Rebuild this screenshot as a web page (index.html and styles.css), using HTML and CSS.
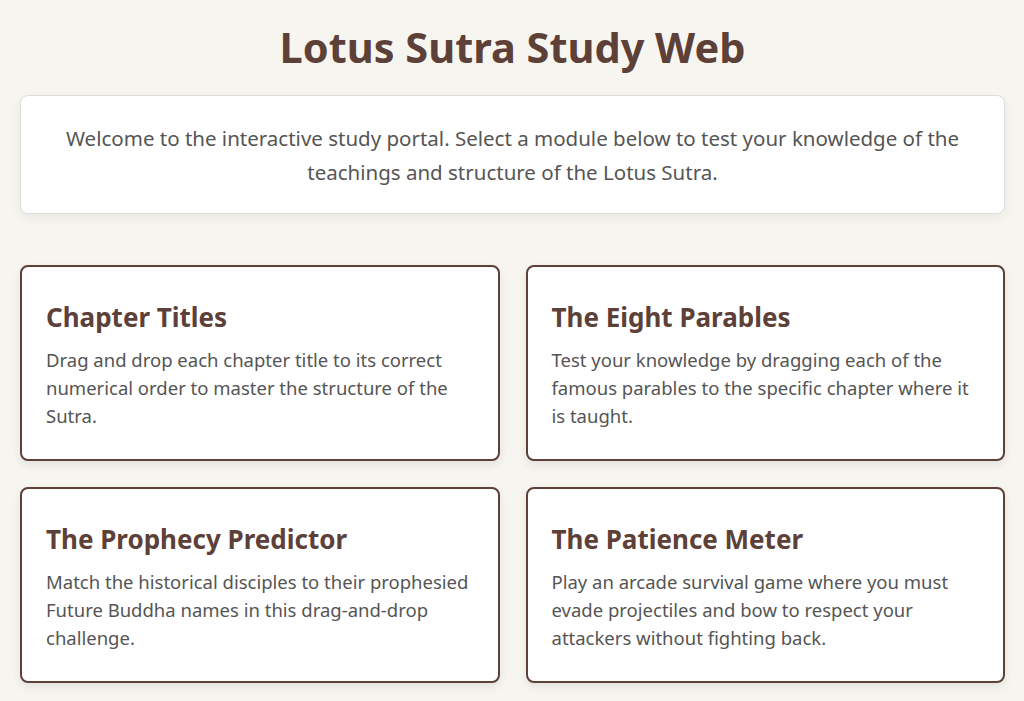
FILE: index.html
```html
<!DOCTYPE html>
<html lang="en">
<head>
    <meta charset="UTF-8">
    <meta name="viewport" content="width=device-width, initial-scale=1.0">
    <title>Lotus Sutra Study Web</title>
    <link rel="stylesheet" href="styles.css">
</head>
<body>
    <h1>Lotus Sutra Study Web</h1>
    <div class="intro">
        <p>Welcome to the interactive study portal. Select a module below to test your knowledge of the teachings and structure of the Lotus Sutra.</p>
    </div>
    <div class="module-grid">
        <div class="module-card">
            <h2>Chapter Titles</h2>
            <p>Drag and drop each chapter title to its correct numerical order to master the structure of the Sutra.</p>
        </div>
        <div class="module-card">
            <h2>The Eight Parables</h2>
            <p>Test your knowledge by dragging each of the famous parables to the specific chapter where it is taught.</p>
        </div>
        <div class="module-card">
            <h2>The Prophecy Predictor</h2>
            <p>Match the historical disciples to their prophesied Future Buddha names in this drag-and-drop challenge.</p>
        </div>
        <div class="module-card">
            <h2>The Patience Meter</h2>
            <p>Play an arcade survival game where you must evade projectiles and bow to respect your attackers without fighting back.</p>
        </div>
    </div>
</body>
</html>
```

FILE: styles.css
```css
body {
    font-family: "Noto Sans", "Open Sans", sans-serif;
    background-color: #f7f5f0;
    color: #555;
    margin: 0;
    padding: 20px 19px 20px 20px;
}
h1 {
    color: #5d4037;
    text-align: center;
    font-size: 41.5px;
    margin: 0 0 21px;
    line-height: 54px;
}
.intro {
    background: #fff;
    border: 1px solid #ddd;
    border-radius: 8px;
    padding: 25px 30px 24px;
    text-align: center;
    box-shadow: 0 4px 12px rgba(0,0,0,0.06);
    margin-bottom: 51px;
}
.intro p {
    margin: 0;
    font-size: 20.5px;
    line-height: 34px;
}
.module-grid {
    display: grid;
    grid-template-columns: 1fr 1fr;
    gap: 26px;
}
.module-card {
    background: #fff;
    border: 2px solid #5d4037;
    border-radius: 8px;
    padding: 32px 24px 29px;
    box-shadow: 0 4px 10px rgba(0,0,0,0.08);
}
.module-card h2 {
    color: #5d4037;
    font-size: 26px;
    margin: 0 0 11px;
    line-height: 36px;
}
.module-card p {
    margin: 0;
    font-size: 18.5px;
    line-height: 28px;
}
```
